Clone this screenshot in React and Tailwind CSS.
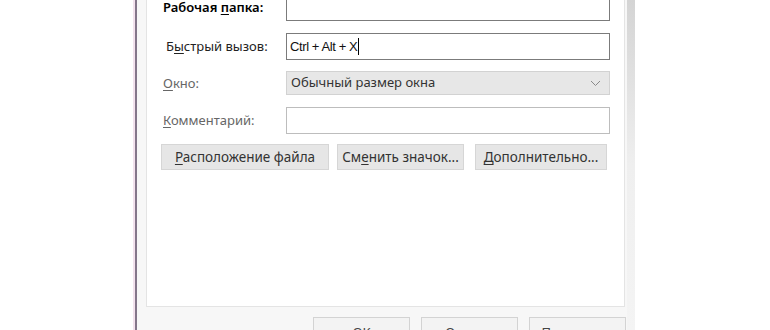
export default function App() {
  const font = { fontFamily: '"Noto Sans", "Open Sans", sans-serif' };
  return (
    <div className="w-[770px] h-[330px] bg-white overflow-hidden flex text-[13px]" style={font}>
      <div className="w-[133px] shrink-0 bg-white" />
      <div className="w-[2px] shrink-0 bg-[#f3e2ee]" />
      <div className="w-[2px] shrink-0 bg-[#84768a]" />
      <div className="w-[490px] shrink-0 bg-[#f7f7f7] flex flex-col pl-[9px]">
        <div className="-mt-[20px] h-[327px] w-[479px] shrink-0 bg-white border border-[#e4e4e4] flex flex-col pt-[13px] pr-[14px]">
          {/* Row 1 */}
          <div className="flex items-center h-[27px]">
            <div className="w-[139px] pl-[16px] text-black font-semibold text-[13px] leading-none">
              Рабочая <span className="underline underline-offset-2">п</span>апка:
            </div>
            <div className="w-[324px] h-[27px] border border-[#7b7b7b] bg-white" />
          </div>
          {/* Row 2 */}
          <div className="flex items-center h-[27px] mt-[12px]">
            <div className="w-[139px] pl-[19px] text-[#222] leading-none">
              Б<span className="underline underline-offset-2">ы</span>стрый вызов:
            </div>
            <div className="w-[324px] h-[27px] border border-[#7b7b7b] bg-white flex items-center pl-[3px]">
              <span className="text-[#111] text-[13px] tracking-[-0.4px]" style={{ fontFamily: '"Liberation Sans", Arial, sans-serif' }}>
                Ctrl + Alt + X
              </span>
              <span className="w-px h-[17px] bg-black ml-px" />
            </div>
          </div>
          {/* Row 3 */}
          <div className="flex items-center h-[24px] mt-[11px]">
            <div className="w-[139px] pl-[16px] text-[#666] leading-none">
              <span className="underline underline-offset-2">О</span>кно:
            </div>
            <div className="w-[324px] h-[24px] border border-[#d2d2d2] bg-[#e7e7e7] flex items-center justify-between pl-[4px] pr-[8px]">
              <span className="text-[#333]">Обычный размер окна</span>
              <svg width="11" height="7" viewBox="0 0 11 7" fill="none">
                <path d="M1 1 L5.5 5.5 L10 1" stroke="#8a8a8a" strokeWidth="1" />
              </svg>
            </div>
          </div>
          {/* Row 4 */}
          <div className="flex items-center h-[27px] mt-[12px]">
            <div className="w-[139px] pl-[16px] text-[#666] leading-none">
              <span className="underline underline-offset-2">К</span>омментарий:
            </div>
            <div className="w-[324px] h-[27px] border border-[#bdbdbd] bg-white" />
          </div>
          {/* Buttons */}
          <div className="flex items-center mt-[10px] pl-[14px] text-[13.5px]">
            <div className="w-[168px] h-[26px] border border-[#d6d6d6] bg-[#e6e6e6] flex items-center justify-center text-[#333]">
              <span><span className="underline underline-offset-2">Р</span>асположение файла</span>
            </div>
            <div className="w-[127px] h-[26px] ml-[8px] border border-[#d6d6d6] bg-[#e6e6e6] flex items-center justify-center text-[#333]">
              <span>См<span className="underline underline-offset-2">е</span>нить значок...</span>
            </div>
            <div className="w-[132px] h-[26px] ml-[11px] border border-[#d6d6d6] bg-[#e6e6e6] flex items-center justify-center text-[#333]">
              <span><span className="underline underline-offset-2">Д</span>ополнительно...</span>
            </div>
          </div>
        </div>
        <div className="flex justify-end gap-[11px] pr-[1px] mt-[10px]">
          <div className="w-[97px] h-[24px] border border-[#d3d3d3] bg-[#f3f3f3] flex items-start justify-center text-[#444] pt-[5px] leading-[18px]">OK</div>
          <div className="w-[97px] h-[24px] border border-[#d3d3d3] bg-[#f3f3f3] flex items-start justify-center text-[#444] pt-[5px] leading-[18px]">Отмена</div>
          <div className="w-[97px] h-[24px] border border-[#d3d3d3] bg-[#f3f3f3] flex items-start justify-center text-[#444] pt-[5px] leading-[18px]">Применить</div>
        </div>
      </div>
      <div className="w-[8px] shrink-0 bg-gradient-to-b from-[#d4d4d4] via-[#efefef] to-[#f4f4f4]" />
      <div className="flex-1 bg-white" />
    </div>
  );
}
